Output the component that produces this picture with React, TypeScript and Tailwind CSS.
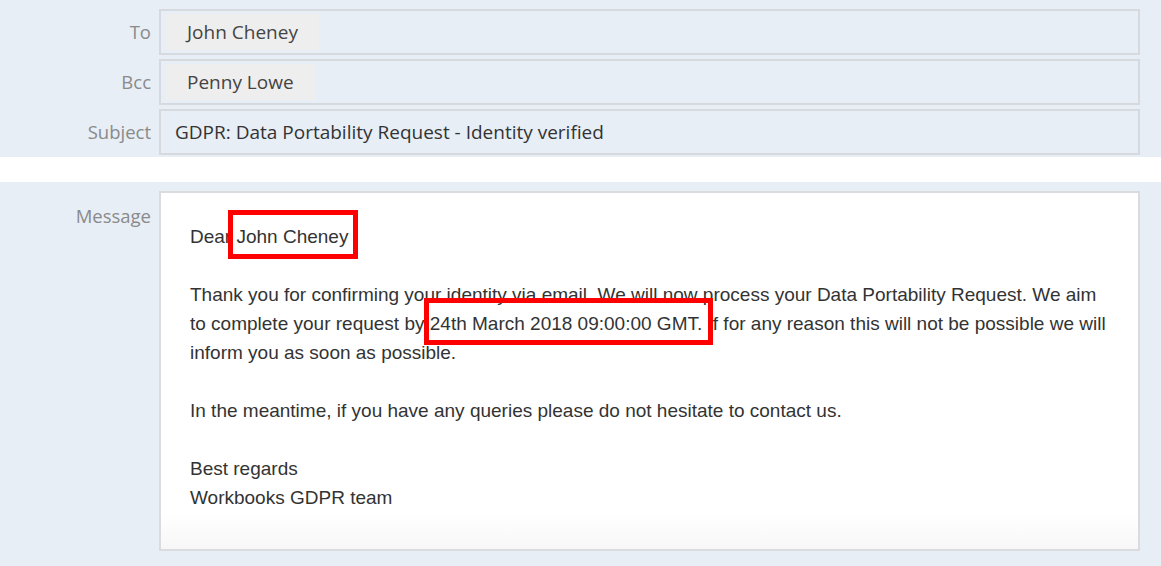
const FIELD = 'flex-1 h-[46px] border-2 border-[#d6dadf] flex items-center'
const LABEL = 'w-[151px] shrink-0 text-right text-[18.5px] text-[#8a8a8a]'

function Chip({ name }: { name: string }) {
  return (
    <div className="h-[36px] ml-[5px] px-[21px] flex items-center bg-[#eeeeee] text-[19px] text-[#444]">
      {name}
    </div>
  )
}

// red annotation frame drawn over a phrase in the message
function Marked({ children, box }: { children: React.ReactNode; box: string }) {
  return (
    <span className="relative">
      {children}
      <span className={`absolute border-[5px] border-[#f00] pointer-events-none ${box}`} />
    </span>
  )
}

export default function App() {
  return (
    <div className="w-[1161px] h-[566px] bg-white overflow-hidden" style={{ fontFamily: '"Open Sans", sans-serif' }}>
      {/* header fields */}
      <div className="bg-[#e7eef6] pt-[9px] pb-[2px] pr-[21px] flex flex-col gap-[4px]">
        <div className="flex items-center gap-[8px]">
          <div className={LABEL}>To</div>
          <div className={FIELD}>
            <Chip name="John Cheney" />
          </div>
        </div>
        <div className="flex items-center gap-[8px]">
          <div className={LABEL}>Bcc</div>
          <div className={FIELD}>
            <Chip name="Penny Lowe" />
          </div>
        </div>
        <div className="flex items-center gap-[8px]">
          <div className={LABEL}>Subject</div>
          <div className={`${FIELD} pl-[14px] text-[19px] text-[#333]`}>
            GDPR: Data Portability Request - Identity verified
          </div>
        </div>
      </div>

      {/* message */}
      <div className="mt-[25px] bg-[#e7eef6] pt-[9px] pb-[15px] pr-[21px] flex gap-[8px] h-[384px]">
        <div className={`${LABEL} pt-[11px]`}>Message</div>
        <div
          className="flex-1 border-2 border-[#d9dbde] bg-gradient-to-b from-white from-90% to-[#f7f7f7] pl-[29px] pr-[10px] pt-[29px] text-[19px] leading-[29px] text-[#333] whitespace-nowrap"
          style={{ fontFamily: '"Liberation Sans", Arial, sans-serif' }}
        >
          <p>
            Dear <Marked box="-left-[8px] -right-[10px] -top-[16px] -bottom-[12px]">John Cheney</Marked>
          </p>
          <p className="mt-[29px]">
            Thank you for confirming your identity via email. We will now process your Data Portability Request. We aim
            <br />
            to complete your request by{' '}
            <Marked box="-left-[6px] -right-[11px] -top-[15px] -bottom-[11px]">24th March 2018 09:00:00 GMT.</Marked> If
            for any reason this will not be possible we will
            <br />
            inform you as soon as possible.
          </p>
          <p className="mt-[29px]">In the meantime, if you have any queries please do not hesitate to contact us.</p>
          <p className="mt-[29px]">
            Best regards
            <br />
            Workbooks GDPR team
          </p>
        </div>
      </div>
    </div>
  )
}
